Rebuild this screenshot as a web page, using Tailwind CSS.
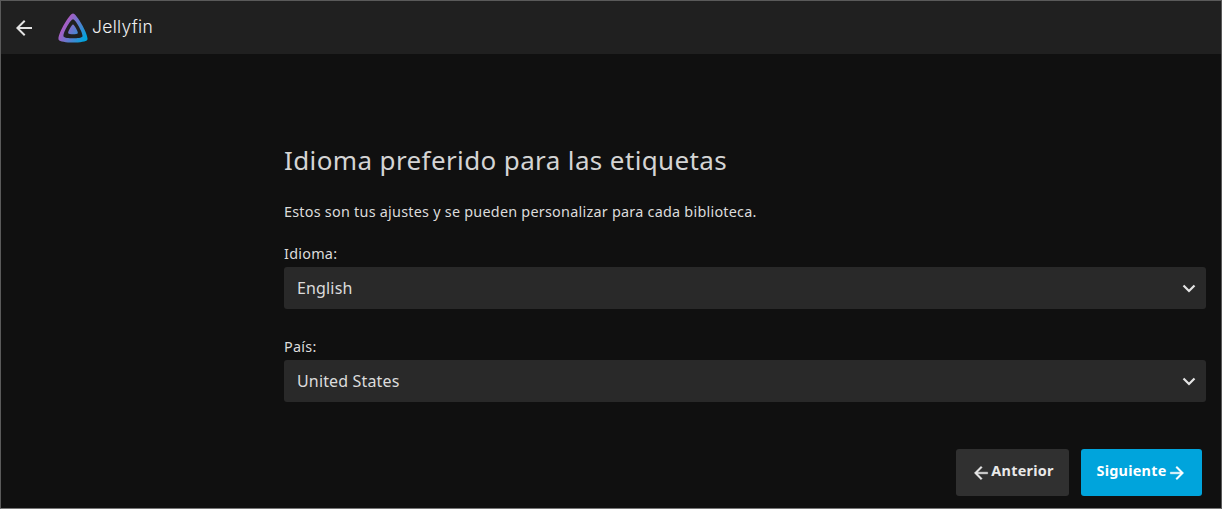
<!DOCTYPE html>
<html lang="es">
<head>
    <meta charset="UTF-8">
    <title>Jellyfin</title>
    <script src="https://cdn.jsdelivr.net/npm/@tailwindcss/browser@4"></script>
</head>
<body class="bg-[#101010] font-['Noto_Sans',sans-serif] text-[#dcdcdc]">
<div class="flex flex-col h-[509px] w-[1222px] overflow-hidden border border-[#5a5a5a] border-b-[#777]">

    <!-- Header -->
    <header class="flex items-center h-[53px] shrink-0 bg-[#202020]">
        <svg class="ml-[11px] w-[24px] h-[24px]" viewBox="0 0 24 24" fill="#e4e4e4"><path d="M20 11H7.83l5.59-5.59L12 4l-8 8 8 8 1.41-1.41L7.83 13H20v-2z"/></svg>
        <svg class="ml-[21px] w-[32px] h-[32px]" viewBox="0 0 512 512">
            <defs>
                <linearGradient id="jf" gradientUnits="userSpaceOnUse" x1="110" y1="220" x2="456" y2="419">
                    <stop offset="0" stop-color="#aa5cc3"/>
                    <stop offset="1" stop-color="#00a4dc"/>
                </linearGradient>
            </defs>
            <path fill="url(#jf)" d="M256 201.6c-20.4 0-86.2 119.3-76.2 139.4s142.5 19.9 152.4 0-55.7-139.4-76.2-139.4z"/>
            <path fill="url(#jf)" d="M256 23.3c-61.6 0-259.8 359.4-229.6 420.1s429.3 60 459.2 0S317.6 23.3 256 23.3zm150.5 367.5c-19.6 39.3-281.1 39.8-300.9 0S215.7 115.9 256 115.9s170.1 235.7 150.5 274.9z"/>
        </svg>
        <span class="ml-[3px] font-['Inter',sans-serif] font-light text-[17.5px] tracking-[0.3px] text-[#f0f0f0]">Jellyfin</span>
    </header>

    <!-- Content -->
    <main class="flex flex-col pl-[283px] pr-[15px] pt-[87px]">
        <h1 class="text-[26px] leading-[38px] tracking-[0.38px] text-[#d4d4d4]">Idioma preferido para las etiquetas</h1>
        <p class="mt-[23px] text-[14.4px] leading-[20px] tracking-[0.24px]">Estos son tus ajustes y se pueden personalizar para cada biblioteca.</p>

        <label class="mt-[22px] text-[14.4px] leading-[20px] tracking-[0.25px]">Idioma:</label>
        <div class="mt-[3px] flex items-center justify-between h-[42px] pl-[13px] pr-[9px] rounded-[3px] bg-[#292929] text-[16px] tracking-[0.15px]">
            <span>English</span>
            <svg class="w-[16px] h-[16px]" viewBox="0 0 16 16" fill="none" stroke="#e4e4e4" stroke-width="2.2"><path d="M2.5 5.5 8 11l5.5-5.5"/></svg>
        </div>

        <label class="mt-[28px] text-[14.4px] leading-[20px] tracking-[0.25px]">País:</label>
        <div class="mt-[3px] flex items-center justify-between h-[42px] pl-[13px] pr-[9px] rounded-[3px] bg-[#292929] text-[16px] tracking-[0.15px]">
            <span>United States</span>
            <svg class="w-[16px] h-[16px]" viewBox="0 0 16 16" fill="none" stroke="#e4e4e4" stroke-width="2.2"><path d="M2.5 5.5 8 11l5.5-5.5"/></svg>
        </div>

        <div class="mt-[47px] flex justify-end gap-[12px] pr-[4px]">
            <button class="flex items-center justify-center w-[113px] h-[47px] rounded-[3px] bg-[#303030] text-[14.4px] tracking-[0.25px] font-bold text-[#e8e8e8]">
                <svg class="w-[20px] h-[20px] mt-[1px]" viewBox="0 0 24 24" fill="#e8e8e8" stroke="#e8e8e8" stroke-width="0.5"><path d="M20 11H7.83l5.59-5.59L12 4l-8 8 8 8 1.41-1.41L7.83 13H20v-2z"/></svg>
                <span class="-mt-[3px]">Anterior</span>
            </button>
            <button class="flex items-center justify-center w-[121px] h-[47px] rounded-[3px] bg-[#00a4dc] text-[14.4px] tracking-[0.25px] font-bold text-white">
                <span class="-mt-[3px]">Siguiente</span>
                <svg class="w-[20px] h-[20px] mt-[1px]" viewBox="0 0 24 24" fill="#fff" stroke="#fff" stroke-width="0.5"><path d="M4 11h12.17l-5.59-5.59L12 4l8 8-8 8-1.41-1.41L16.17 13H4v-2z"/></svg>
            </button>
        </div>
    </main>
</div>
</body>
</html>
